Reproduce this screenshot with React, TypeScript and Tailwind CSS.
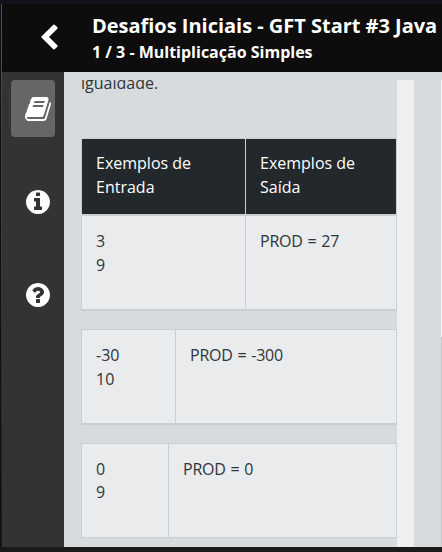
import type { ReactNode } from 'react';

const CIRCLE =
  'm640 416q0 209-103 385.5t-279.5 279.5-385.5 103-385.5-103-279.5-279.5-103-385.5 103-385.5 279.5-279.5 385.5-103 385.5 103 279.5 279.5 103 385.5z';

const ICONS = {
  back: 'M1427 301l-531 531 531 531q19 19 19 45t-19 45l-166 166q-19 19-45 19t-45-19l-742-742q-19-19-19-45t19-45l742-742q19-19 45-19t45 19l166 166q19 19 19 45t-19 45z',
  book: 'M1639 478q40 57 18 129l-275 906q-19 64-76.5 107.5t-122.5 43.5h-923q-77 0-148.5-53.5t-99.5-131.5q-24-67-2-127 0-4 3-27t4-37q1-8-3-21.5t-3-19.5q2-11 8-21t16.5-23.5 16.5-23.5q23-38 45-91.5t30-91.5q3-10 .5-30t-.5-28q3-11 17-28t17-23q21-36 42-92t25-90q1-9-2.5-32t.5-28q4-13 22-30.5t22-22.5q19-26 42.5-84.5t27.5-96.5q1-8-3-25.5t-2-26.5q2-8 9-18t18-23 17-21q8-12 16.5-30.5t15-35 16-36 19.5-32 26.5-23.5 36-11.5 47.5 5.5l-1 3q38-9 51-9h761q74 0 114 56t18 130l-274 906q-36 119-71.5 153.5t-128.5 34.5h-869q-27 0-38 15-11 16-1 43 24 70 144 70h923q29 0 56-15.5t35-41.5l300-987q7-22 5-57 38 15 59 43zm-1064 2q-4 13 2 22.5t20 9.5h608q13 0 25.5-9.5t16.5-22.5l21-64q4-13-2-22.5t-20-9.5h-608q-13 0-25.5 9.5t-16.5 22.5zm-83 256q-4 13 2 22.5t20 9.5h608q13 0 25.5-9.5t16.5-22.5l21-64q4-13-2-22.5t-20-9.5h-608q-13 0-25.5 9.5t-16.5 22.5z',
  info:
    'M1152 1376v-160q0-14-9-23t-23-9h-96v-512q0-14-9-23t-23-9h-320q-14 0-23 9t-9 23v160q0 14 9 23t23 9h96v320h-96q-14 0-23 9t-9 23v160q0 14 9 23t23 9h448q14 0 23-9t9-23zm-128-896v-160q0-14-9-23t-23-9h-192q-14 0-23 9t-9 23v160q0 14 9 23t23 9h192q14 0 23-9t9-23z' +
    CIRCLE,
  help:
    'M1024 1376v-192q0-14-9-23t-23-9h-192q-14 0-23 9t-9 23v192q0 14 9 23t23 9h192q14 0 23-9t9-23zm256-672q0-88-55.5-163t-138.5-116-170-41q-243 0-371 213-15 24 8 42l132 100q7 6 19 6 16 0 25-12 53-68 86-92 34-24 86-24 48 0 85.5 26t37.5 59q0 38-20 61t-68 45q-63 28-115.5 86.5t-52.5 125.5v36q0 14 9 23t23 9h192q14 0 23-9t9-23q0-19 21.5-49.5t54.5-49.5q32-18 49-28.5t46-35 44.5-48 28-60.5 12.5-81z' +
    'm384 192q0 209-103 385.5t-279.5 279.5-385.5 103-385.5-103-279.5-279.5-103-385.5 103-385.5 279.5-279.5 385.5-103 385.5 103 279.5 279.5 103 385.5z',
};

function Icon({ name }: { name: keyof typeof ICONS }) {
  return (
    <svg viewBox="0 0 1792 1792" className="size-7 shrink-0 overflow-visible fill-white" aria-hidden="true">
      <path d={ICONS[name]} />
    </svg>
  );
}

function Row({ columns, input, output }: { columns: string; input: ReactNode; output: string }) {
  return (
    <div className={`grid h-[93px] gap-px bg-[#c9ced3] ${columns}`}>
      <div className="bg-[#eaebed] px-3.5 pt-[13px]">{input}</div>
      <div className="bg-[#eaebed] px-3.5 pt-[13px] tracking-[-0.25px] [word-spacing:1px]">{output}</div>
    </div>
  );
}

export default function App() {
  return (
    <div className="flex h-[552px] w-[442px] flex-col overflow-hidden bg-[#1a1a1a] font-['Open_Sans','Noto_Sans',sans-serif]">
      <div className="h-1 shrink-0 bg-[#12121c]" />
      <div className="flex h-[543px] shrink-0">
        <div className="w-px shrink-0 bg-[#101014]" />
        <div className="w-px shrink-0 bg-linear-to-b from-[#c01c38] via-[#84142c] to-[#24101a]" />
        <div className="flex min-w-0 flex-1 flex-col">
          <header className="flex h-[68px] shrink-0 bg-[#0d0d0d] text-white">
            <button className="flex w-[90px] shrink-0 items-start pt-[19.5px] pl-[32.5px]" aria-label="Voltar">
              <Icon name="back" />
            </button>
            <div className="pt-[9px] font-bold whitespace-nowrap">
              <h1 className="text-[20px] leading-[26px] tracking-[-0.02px]">Desafios Iniciais - GFT Start #3 Java</h1>
              <h2 className="text-[16px] leading-[26px]">1 / 3 - Multiplicação Simples</h2>
            </div>
          </header>
          <div className="flex min-h-0 flex-1">
            <nav className="flex w-[62px] shrink-0 flex-col bg-[#333] pt-2 pl-[9px]">
              <div className="flex h-[57px] w-11 items-center rounded bg-[#666] pl-3.5">
                <Icon name="book" />
              </div>
              <div className="mt-[51px] pl-[12.5px]">
                <Icon name="info" />
              </div>
              <div className="mt-[65px] pl-[12.5px]">
                <Icon name="help" />
              </div>
            </nav>
            <main className="flex min-w-0 flex-1 bg-[#d7dbde] pt-2">
              <section className="h-[467px] w-[333px] shrink-0 overflow-hidden pl-[17px] text-[16px] leading-6 text-[#30353a]">
                <p className="-mt-[9px] h-[67px]">igualdade.</p>
                <div className="w-[316px] border border-b-2 border-[#c9ced3]">
                  <div className="grid h-[75px] grid-cols-[163px_150px] gap-px bg-[#c9ced3] text-white">
                    <div className="bg-[#23282c] px-3.5 pt-3">
                      Exemplos de
                      <br />
                      Entrada
                    </div>
                    <div className="bg-[#23282c] px-3.5 pt-3">
                      Exemplos de
                      <br />
                      Saída
                    </div>
                  </div>
                  <div className="h-0.5 bg-[#c9ced3]" />
                  <Row columns="grid-cols-[163px_150px]" input={<>3<br />9</>} output="PROD = 27" />
                </div>
                <div className="mt-[18px] w-[316px] border border-b-2 border-[#c9ced3]">
                  <Row columns="grid-cols-[93px_220px]" input={<>-30<br />10</>} output="PROD = -300" />
                </div>
                <div className="mt-[18px] w-[316px] border border-[#c9ced3]">
                  <Row columns="grid-cols-[86px_227px]" input={<>0<br /><span className="relative -top-px">9</span></>} output="PROD = 0" />
                </div>
              </section>
              <div className="w-[17px] shrink-0 bg-[#efefef]" />
              <div className="flex-1" />
              <div className="flex w-px flex-col">
                <div className="h-[257px] bg-[#f4f4f4]" />
                <div className="flex-1 bg-[#c6c9cc]" />
              </div>
            </main>
          </div>
        </div>
      </div>
    </div>
  );
}
